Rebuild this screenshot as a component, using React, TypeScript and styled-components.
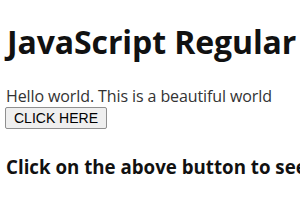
import React from "react";
import styled, { createGlobalStyle } from "styled-components";

const GlobalStyle = createGlobalStyle`
  html, body {
    margin: 0;
    background: #ffffff;
    overflow: hidden;
  }
  body {
    padding: 8px 6px;
    font-family: "Open Sans", "DejaVu Sans", sans-serif;
    color: #222222;
  }
`;

const Title = styled.h1`
  margin: 12px 0 22px 1px;
  font-size: 32px;
  line-height: 44px;
  font-weight: 700;
  color: #111111;
  white-space: nowrap;
  letter-spacing: -0.1px;
`;

const Text = styled.p`
  margin: 0;
  font-size: 16px;
  line-height: 21px;
  color: #333333;
  white-space: nowrap;
  letter-spacing: -0.1px;
`;

const Button = styled.button`
  display: block;
  font-family: "Liberation Sans", Arial, sans-serif;
  font-size: 14px;
  line-height: 16px;
  padding: 2px 8px;
  margin: 0 0 0 -1px;
  height: 22px;
  background: #efefef;
  border: 1px solid #8f8f8f;
  border-radius: 2px;
  color: #000000;
`;

const Note = styled.h3`
  margin: 25px 0 0;
  font-size: 18.72px;
  font-weight: 700;
  color: #111111;
  white-space: nowrap;
`;

const App: React.FC = () => {
  return (
    <>
      <GlobalStyle />
      <Title>JavaScript Regular</Title>
      <Text>Hello world. This is a beautiful world</Text>
      <Button>CLICK HERE</Button>
      <Note>Click on the above button to see</Note>
    </>
  );
};

export default App;
